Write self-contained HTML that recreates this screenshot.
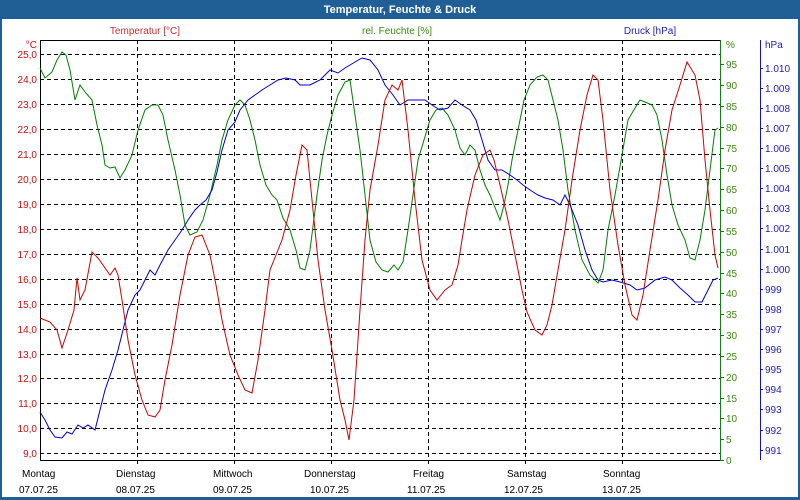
<!DOCTYPE html>
<html><head><meta charset="utf-8"><style>
html,body{margin:0;padding:0;width:800px;height:500px;overflow:hidden;background:#fff}
svg{display:block}
text{font-family:"Liberation Sans",sans-serif;font-size:10px}
</style></head><body>
<svg width="800" height="500" viewBox="0 0 800 500">
<rect x="0" y="0" width="800" height="500" fill="#1f5f96"/>
<rect x="2" y="19" width="796" height="478" fill="#fff"/>
<text x="400" y="13" text-anchor="middle" fill="#fff" font-weight="bold" style="font-size:11px">Temperatur, Feuchte &amp; Druck</text>
<text x="145" y="34" text-anchor="middle" fill="#c83030">Temperatur [°C]</text>
<text x="397" y="34" text-anchor="middle" fill="#3a8a10">rel. Feuchte [%]</text>
<text x="650" y="34" text-anchor="middle" fill="#2020c0">Druck [hPa]</text>
<g stroke="#000" stroke-dasharray="4,3" stroke-width="1">
<path d="M40 54.5H720M40 79.5H720M40 104.5H720M40 129.5H720M40 154.5H720M40 179.5H720M40 204.5H720M40 229.5H720M40 254.5H720M40 279.5H720M40 304.5H720M40 329.5H720M40 354.5H720M40 378.5H720M40 403.5H720M40 428.5H720M40 453.5H720"/>
<path d="M137.5 40V465M234.5 40V465M331.5 40V465M428.5 40V465M525.5 40V465M622.5 40V465"/>
</g>
<path d="M40.5 40V460.5H720M40 40.5H720" stroke="#000" fill="none"/>
<g fill="#c81010" text-anchor="end">
<text x="37" y="48">°C</text>
<text x="37" y="58">25,0</text><text x="37" y="83">24,0</text><text x="37" y="108">23,0</text><text x="37" y="133">22,0</text><text x="37" y="158">21,0</text><text x="37" y="183">20,0</text><text x="37" y="208">19,0</text><text x="37" y="233">18,0</text><text x="37" y="258">17,0</text><text x="37" y="283">16,0</text><text x="37" y="308">15,0</text><text x="37" y="333">14,0</text><text x="37" y="358">13,0</text><text x="37" y="382">12,0</text><text x="37" y="407">11,0</text><text x="37" y="432">10,0</text><text x="37" y="457">9,0</text>
</g>
<path d="M720.5 40V460.5" stroke="#108010"/>
<g stroke="#108010"><path d="M720 64.5h4M720 85.5h4M720 106.5h4M720 127.5h4M720 148.5h4M720 168.5h4M720 189.5h4M720 210.5h4M720 231.5h4M720 252.5h4M720 273.5h4M720 293.5h4M720 314.5h4M720 335.5h4M720 356.5h4M720 377.5h4M720 398.5h4M720 418.5h4M720 439.5h4M720 460.5h4"/></g>
<g fill="#3a8a10">
<text x="726" y="48">%</text>
<text x="726" y="68">95</text><text x="726" y="89">90</text><text x="726" y="110">85</text><text x="726" y="131">80</text><text x="726" y="152">75</text><text x="726" y="172">70</text><text x="726" y="193">65</text><text x="726" y="214">60</text><text x="726" y="235">55</text><text x="726" y="256">50</text><text x="726" y="277">45</text><text x="726" y="297">40</text><text x="726" y="318">35</text><text x="726" y="339">30</text><text x="726" y="360">25</text><text x="726" y="381">20</text><text x="726" y="402">15</text><text x="726" y="422">10</text><text x="726" y="443">5</text><text x="726" y="464">0</text>
</g>
<path d="M760.5 40V460" stroke="#1010d0"/>
<g stroke="#1010d0"><path d="M760 68.5h3M760 88.5h3M760 108.5h3M760 128.5h3M760 148.5h3M760 168.5h3M760 188.5h3M760 208.5h3M760 228.5h3M760 249.5h3M760 269.5h3M760 289.5h3M760 309.5h3M760 329.5h3M760 349.5h3M760 369.5h3M760 389.5h3M760 409.5h3M760 430.5h3M760 450.5h3"/></g>
<g fill="#2020c0">
<text x="765" y="48">hPa</text>
<text x="765" y="72">1.010</text><text x="765" y="92">1.009</text><text x="765" y="112">1.008</text><text x="765" y="132">1.007</text><text x="765" y="152">1.006</text><text x="765" y="172">1.005</text><text x="765" y="192">1.004</text><text x="765" y="212">1.003</text><text x="765" y="232">1.002</text><text x="765" y="253">1.001</text><text x="765" y="273">1.000</text><text x="765" y="293">999</text><text x="765" y="313">998</text><text x="765" y="333">997</text><text x="765" y="353">996</text><text x="765" y="373">995</text><text x="765" y="393">994</text><text x="765" y="413">993</text><text x="765" y="434">992</text><text x="765" y="454">991</text>
</g>
<polyline fill="none" stroke="#008000" points="40,68 45,78 52,72 57,60 62,52 66,55 70,70 75,100 80,85 85,92 92,100 97,125 102,145 105,165 110,168 115,167 120,178 125,170 132,155 138,130 145,110 152,105 158,105 163,115 168,140 175,170 180,195 185,225 190,235 197,232 203,220 210,195 217,165 222,140 228,120 235,105 240,100 245,105 250,120 255,140 260,165 266,185 272,195 277,200 283,218 290,230 296,250 300,268 305,270 310,250 317,195 322,160 327,135 332,115 338,95 345,82 350,80 355,115 360,150 365,195 370,240 376,262 382,270 388,272 394,265 398,270 403,262 408,230 413,195 418,160 424,140 430,120 436,110 442,108 448,115 455,130 460,148 465,155 470,145 475,150 480,170 485,185 490,195 496,210 500,220 504,205 508,185 512,160 518,130 524,100 530,85 537,77 543,75 548,80 553,100 558,120 563,150 568,190 575,230 582,260 590,275 598,283 603,270 608,230 615,195 622,155 628,120 635,108 640,100 645,102 652,105 657,115 662,140 667,175 672,205 678,225 685,240 690,258 695,260 700,240 705,210 710,170 715,130 718,128"/>
<polyline fill="none" stroke="#0000d0" points="40,412 45,420 50,430 55,437 62,438 67,432 72,434 78,425 83,428 88,425 95,430 100,410 105,390 112,370 118,350 123,330 128,310 135,295 140,290 145,280 150,270 155,275 160,265 168,250 175,240 182,230 188,220 195,210 200,205 206,200 212,190 217,172 222,150 228,130 235,122 240,110 248,100 255,95 262,90 270,85 278,80 286,78 295,80 300,85 310,85 320,80 330,70 338,73 345,68 355,62 362,58 370,60 378,70 385,85 393,95 400,105 408,100 415,100 425,100 432,105 440,110 448,108 455,100 462,105 470,110 476,120 482,140 488,160 495,170 502,170 510,175 517,180 523,185 530,190 538,195 545,198 553,200 560,205 565,195 570,205 578,225 585,250 592,270 598,280 603,282 612,280 620,282 630,285 637,290 645,288 655,280 665,277 672,280 680,288 688,295 695,302 702,302 708,290 713,280 718,278"/>
<polyline fill="none" stroke="#d00000" points="40,318 50,322 57,330 62,348 68,330 74,310 77,278 80,300 85,290 92,252 98,258 105,268 110,275 115,268 118,275 122,300 128,340 135,375 142,400 148,415 155,417 160,410 165,380 172,345 180,295 188,255 195,237 202,235 210,255 216,285 222,320 230,355 238,375 245,390 252,393 258,360 265,310 270,270 276,255 282,240 290,210 296,175 302,145 307,150 312,200 318,260 325,310 332,350 340,400 345,420 349,440 354,400 360,310 365,240 370,190 378,145 385,100 392,85 398,90 402,80 408,130 415,200 422,260 430,290 437,300 445,290 452,285 458,265 462,240 467,210 475,175 483,155 490,150 494,160 500,185 508,220 515,255 522,290 527,312 535,330 542,335 547,325 552,305 558,270 565,230 572,180 580,130 587,95 593,75 598,80 603,120 610,190 618,245 625,285 632,315 637,320 643,295 650,250 658,200 665,150 672,110 680,85 687,62 695,75 700,100 705,160 710,210 715,255 718,268"/>
<g fill="#000">
<text x="22" y="477">Montag</text><text x="19" y="493">07.07.25</text>
<text x="116" y="477">Dienstag</text><text x="116" y="493">08.07.25</text>
<text x="213" y="477">Mittwoch</text><text x="213" y="493">09.07.25</text>
<text x="304" y="477">Donnerstag</text><text x="310" y="493">10.07.25</text>
<text x="413" y="477">Freitag</text><text x="407" y="493">11.07.25</text>
<text x="507" y="477">Samstag</text><text x="504" y="493">12.07.25</text>
<text x="603" y="477">Sonntag</text><text x="602" y="493">13.07.25</text>
</g>
</svg>
</body></html>
